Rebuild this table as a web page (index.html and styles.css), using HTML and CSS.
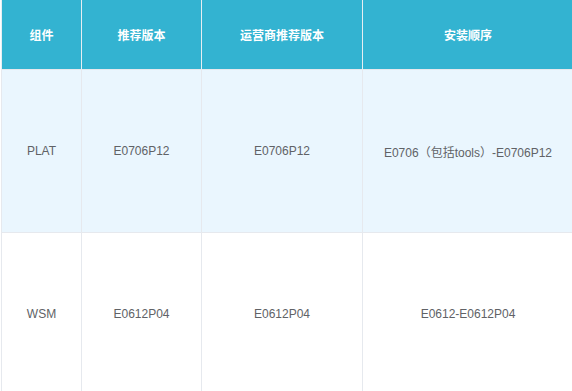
FILE: index.html
```html
<!DOCTYPE html>
<html lang="zh">
<head>
<meta charset="utf-8">
<link rel="stylesheet" href="styles.css">
</head>
<body>
<div class="wrap">
<table class="grid">
  <colgroup>
    <col class="c1"><col class="c2"><col class="c3"><col class="c4">
  </colgroup>
  <thead>
    <tr><th>组件</th><th>推荐版本</th><th>运营商推荐版本</th><th>安装顺序</th></tr>
  </thead>
  <tbody>
    <tr class="alt"><td>PLAT</td><td>E0706P12</td><td>E0706P12</td><td>E0706（包括tools）-E0706P12</td></tr>
    <tr><td>WSM</td><td>E0612P04</td><td>E0612P04</td><td>E0612-E0612P04</td></tr>
  </tbody>
</table>
</div>
</body>
</html>
```
FILE: styles.css
```css
html, body { margin: 0; padding: 0; background: #fff; overflow: hidden; }
.wrap { padding-left: 1px; }
.grid {
  border-collapse: collapse;
  table-layout: fixed;
  width: 572px;
  font-family: "Liberation Sans", "Noto Sans CJK SC", sans-serif;
  font-size: 12px;
}
.c1 { width: 80px; }
.c2 { width: 120px; }
.c3 { width: 161px; }
.c4 { width: 211px; }
.grid th {
  background: #33b3d1;
  color: #fff;
  font-weight: bold;
  height: 69px;
  padding: 0;
  border-left: 1px solid #e8eef2;
  border-right: 1px solid #e8eef2;
  text-align: center;
  vertical-align: middle;
}
.grid td {
  height: 162px;
  padding: 0;
  color: #606266;
  text-align: center;
  vertical-align: middle;
  border: 1px solid #e6e9ee;
}
.grid tr.alt td { background: #eaf6fe; }
```
